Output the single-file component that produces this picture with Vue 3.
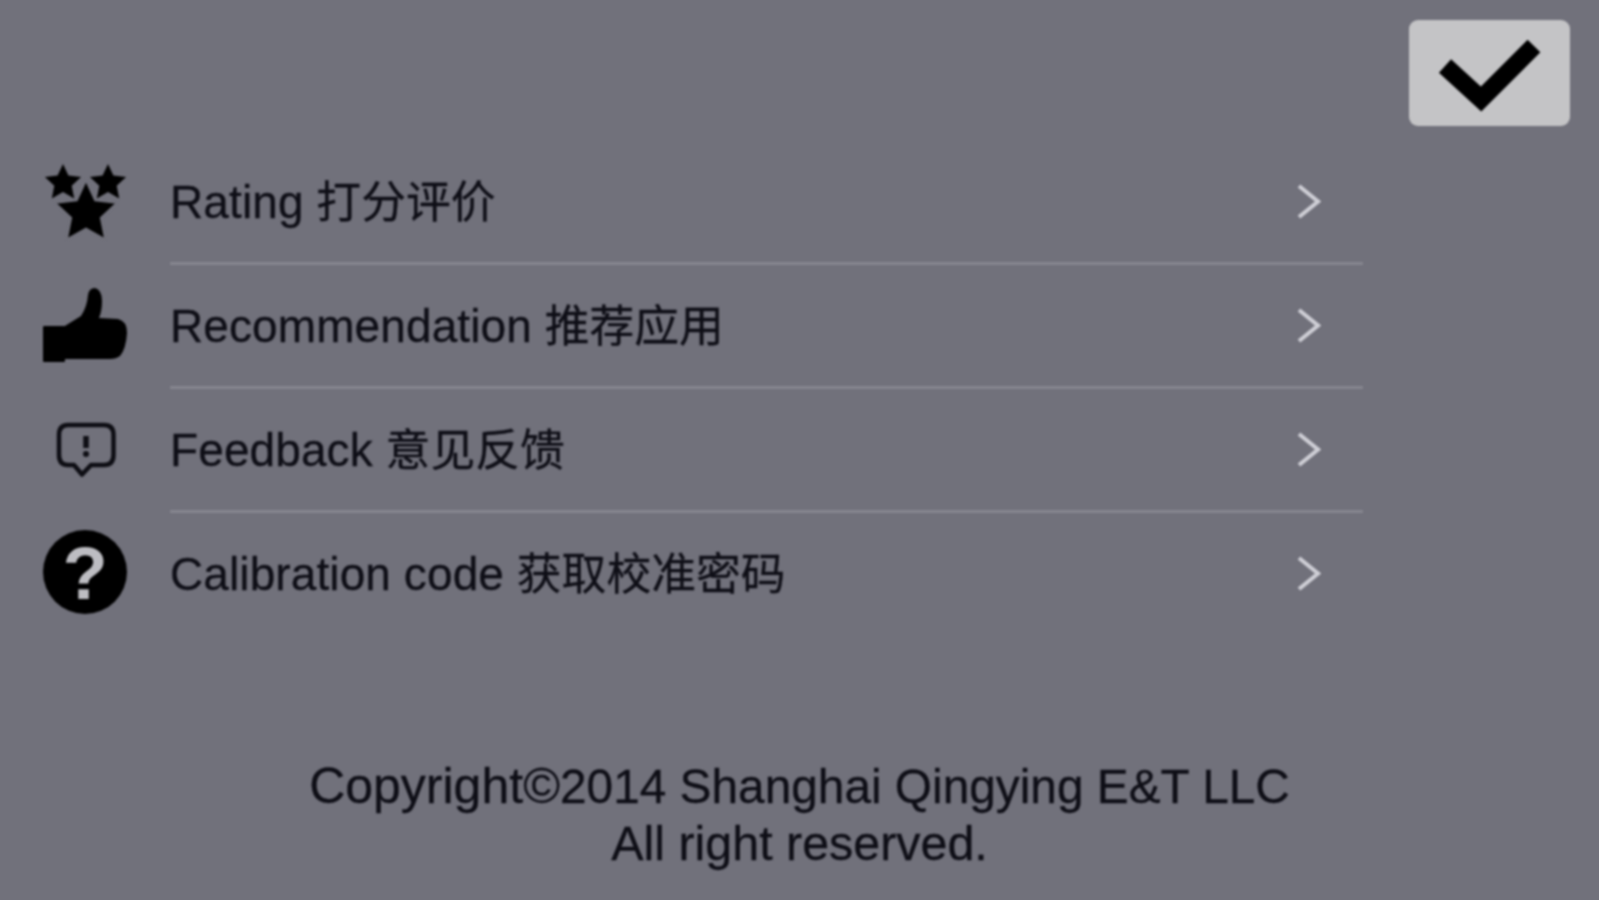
<script setup>
const starPoints = (cx, cy, R) => {
  const pts = []
  for (let i = 0; i < 10; i++) {
    const r = i % 2 ? R * 0.48 : R
    const a = -Math.PI / 2 + (i * Math.PI) / 5
    pts.push(`${(cx + r * Math.cos(a)).toFixed(1)},${(cy + r * Math.sin(a)).toFixed(1)}`)
  }
  return pts.join(' ')
}
const rows = [
  { icon: 'stars', en: 'Rating', zh: '打分评价' },
  { icon: 'thumb', en: 'Recommendation', zh: '推荐应用' },
  { icon: 'alert', en: 'Feedback', zh: '意见反馈' },
  { icon: 'help', en: 'Calibration code', zh: '获取校准密码' }
]
</script>

<template>
  <div class="screen">
    <div class="top">
      <button class="done" aria-label="Done">
        <svg width="161" height="106" viewBox="0 0 161 106">
          <path d="M36 46 L72 79 L125 26" fill="none" stroke="#000" stroke-width="18" />
        </svg>
      </button>
    </div>
    <ul class="list">
      <li v-for="row in rows" :key="row.icon" class="row">
        <div class="icon">
          <svg width="90" height="90" viewBox="0 0 90 90">
            <g v-if="row.icon === 'stars'">
              <polygon :points="starPoints(23, 26, 19)" fill="#000" />
              <polygon :points="starPoints(68, 26, 19)" fill="#000" />
              <polygon :points="starPoints(46, 56, 32)" fill="#000" stroke="#71717b" stroke-width="1.5" />
            </g>
            <g v-else-if="row.icon === 'thumb'" fill="#000">
              <rect x="3" y="45" width="22" height="36" rx="1" />
              <path d="M20 48 L41 35 Q47 26 48 14 Q49 7 55 7 Q62 9 62 20 Q62 30 59 37 L78 38 Q87 40 87 52 Q86 68 80 75 Q76 78 70 78 H40 L20 78 Z" />
            </g>
            <g v-else-if="row.icon === 'alert'">
              <path d="M28 20 H64 Q73.5 20 73.5 30 V50 Q73.5 60 64 60 H51 L42 69.5 L34 60 H28 Q19 60 19 50 V30 Q19 20 28 20 Z" fill="none" stroke="#0e0e14" stroke-width="4.5" stroke-linejoin="round" />
              <path d="M46 31 V43" stroke="#0e0e14" stroke-width="5.5" fill="none" />
              <circle cx="46" cy="49" r="3" fill="#0e0e14" />
            </g>
            <g v-else>
              <circle cx="45" cy="43" r="42" fill="#000" />
              <text x="45" y="70" class="qmark" text-anchor="middle">?</text>
            </g>
          </svg>
        </div>
        <div class="body">
          <span class="label"><span class="en">{{ row.en }}</span> <span class="zh">{{ row.zh }}</span></span>
          <svg class="chev" width="25" height="37" viewBox="0 0 25 37">
            <path d="M3 3 L22 18.5 L3 34" fill="none" stroke="#cfcfd6" stroke-width="4" />
          </svg>
        </div>
      </li>
    </ul>
    <footer class="foot">
      <div><span class="mark">Copyright©</span>2014 Shanghai Qingying E&amp;T LLC</div>
      <div class="second">All right reserved.</div>
    </footer>
  </div>
</template>

<style>
html, body {
  background: #71717b;
}
</style>

<style scoped>
.screen {
  width: 1599px;
  height: 900px;
  overflow: hidden;
  color: #0e0e16;
  font-family: "Liberation Sans", "Noto Sans CJK SC", sans-serif;
  filter: blur(0.9px);
}
.top {
  display: flex;
  justify-content: flex-end;
  padding: 20px 29px 0 0;
}
.done {
  width: 161px;
  height: 106px;
  padding: 0;
  border: 0;
  border-radius: 9px;
  background: #c4c4c6;
  display: block;
}
.done svg {
  display: block;
}
.list {
  list-style: none;
  margin: 15px 0 0;
  padding: 0;
  width: 1363px;
}
.row {
  display: flex;
  height: 124px;
}
.icon {
  width: 170px;
  flex: none;
  display: flex;
  align-items: center;
  justify-content: center;
  padding-bottom: 2px;
  box-sizing: border-box;
}
.icon svg {
  display: block;
}
.body {
  flex: 1;
  display: flex;
  align-items: center;
  justify-content: space-between;
  padding-right: 42px;
  border-bottom: 3px solid #86868f;
}
.row:last-child .body {
  border-bottom-color: transparent;
}
.label {
  font-size: 46px;
  line-height: 56px;
  -webkit-text-stroke: 0.3px #0e0e16;
}
.en {
  letter-spacing: 0.1px;
}
.zh {
  font-size: 44.8px;
}
.chev {
  display: block;
}
.qmark {
  font-family: "Liberation Sans", sans-serif;
  font-weight: 700;
  font-size: 74px;
  fill: #bdbdc2;
}
.foot {
  margin-top: 121px;
  text-align: center;
  font-size: 47.8px;
  line-height: 57px;
  -webkit-text-stroke: 0.3px #0e0e16;
}
.mark {
  font-size: 50px;
}
.second {
  font-size: 48.4px;
}
</style>
